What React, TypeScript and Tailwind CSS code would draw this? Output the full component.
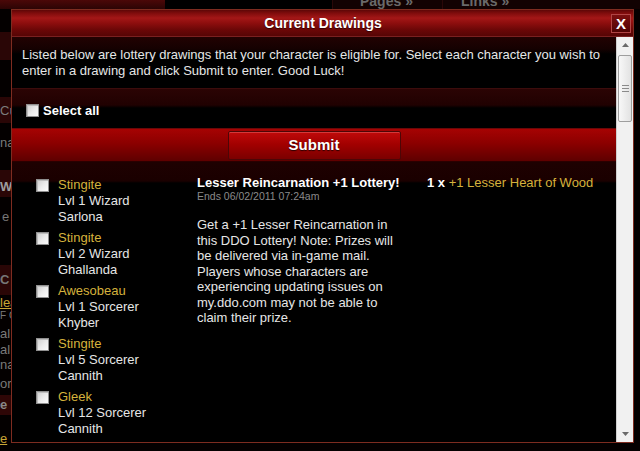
import React from "react";

const characters = [
  { name: "Stingite", lvl: "Lvl 1 Wizard", server: "Sarlona" },
  { name: "Stingite", lvl: "Lvl 2 Wizard", server: "Ghallanda" },
  { name: "Awesobeau", lvl: "Lvl 1 Sorcerer", server: "Khyber" },
  { name: "Stingite", lvl: "Lvl 5 Sorcerer", server: "Cannith" },
  { name: "Gleek", lvl: "Lvl 12 Sorcerer", server: "Cannith" },
];

// the dark site page peeking out around the popup
const sideRows = [
  { h: "h-[23px]", band: false, text: "", cls: "" },
  { h: "h-[28px]", band: true, text: "", cls: "" },
  { h: "h-[37px]", band: false, text: "", cls: "" },
  { h: "h-[26px]", band: true, text: "Current", cls: "pt-[6px] text-[#7c7c7c]" },
  { h: "h-[47px]", band: false, text: "nal", cls: "pt-[12px] text-[#7a7a7a]" },
  { h: "h-[27px]", band: true, text: "Wizard", cls: "pt-[9px] font-bold text-[#9d9d9d]" },
  { h: "h-[68px]", band: false, text: "e", cls: "pt-[12px] pl-[2px] text-[#777]" },
  { h: "h-[30px]", band: true, text: "C", cls: "pt-[7px] font-bold text-[#777]" },
];

function Checkbox() {
  return (
    <span className="block w-[13px] h-[13px] shrink-0 border border-[#8f8f8f] bg-[linear-gradient(135deg,#cfcfcf_0%,#ececec_55%,#fbfbfb_100%)] shadow-[inset_1px_1px_0_#bdbdbd]" />
  );
}

function PageBehind() {
  return (
    <div className="flex flex-col h-[451px] bg-[#040000]">
      <div className="h-[9px] flex overflow-hidden bg-[#120202]">
        <div className="w-[165px] bg-[linear-gradient(180deg,#4b0808,#2c0404)]" />
        <div className="w-[167px] bg-black" />
        <div className="w-[110px] border-l border-[#2a0808] flex justify-start pl-[27px]">
          <span className="-mt-[7px] text-[14px] font-bold leading-[16px] text-[#6a6a6a]">Pages »</span>
        </div>
        <div className="w-[120px] border-l border-[#2a0808] flex justify-start pl-[18px]">
          <span className="-mt-[7px] text-[14px] font-bold leading-[16px] text-[#6a6a6a]">Links »</span>
        </div>
      </div>
      <div className="w-[180px] flex flex-col text-[13px] leading-[16px]">
        {sideRows.map((r, i) => (
          <div key={i} className={`${r.h} ${r.band ? "bg-[#2a0606]" : ""} ${r.cls}`}>
            {r.text}
          </div>
        ))}
        <div className="h-[100px] flex flex-col text-[#7a7a7a]">
          <span className="text-[#c9a635] underline leading-[14px] pt-[1px]">leader</span>
          <span className="text-[10px] leading-[12px]">F C</span>
          <span className="pt-[4px]">al</span>
          <span className="leading-[15px]">al</span>
          <span className="leading-[15px]">na</span>
          <span className="pt-[4px]">or</span>
        </div>
        <div className="h-[20px] bg-[#2e0606] text-[#888] font-bold pt-[2px]">e</div>
        <div className="pt-[16px] text-[#c9a635] underline">e</div>
      </div>
    </div>
  );
}

export default function App() {
  return (
    <div className="relative w-[640px] h-[451px] overflow-hidden bg-black font-['Liberation_Sans',Arial,sans-serif]">
      <PageBehind />

      <div className="absolute left-[11px] top-[9px] w-[623px] h-[434px] border border-[#7e2c20] bg-black flex flex-col">
        {/* title bar */}
        <div className="h-[27px] shrink-0 flex items-center border-b border-[#7a2020] bg-[linear-gradient(180deg,#5e0707_0px,#7e0c0c_3px,#a41717_8px,#8e0e0e_13px,#6a0707_20px,#560505_26px)]">
          <div className="w-[23px]" />
          <div className="flex-1 text-center text-[14px] font-bold text-white [text-shadow:0_1px_1px_#300]">
            Current Drawings
          </div>
          <button className="mr-[2px] w-[20px] h-[19px] flex items-center justify-center border border-[#b04545] bg-[linear-gradient(180deg,#7c0f0f,#500404)] text-[15px] font-bold leading-none text-white">
            X
          </button>
        </div>

        {/* body */}
        <div className="flex-1 flex min-h-0">
          <div className="w-[604px] flex flex-col text-[#e6e6e6]">
            <div className="h-[51px] pt-[10px] pl-[10px] pr-[8px] text-[13px] leading-[16px] bg-[linear-gradient(180deg,#220202_0px,#150101_12px,#000_17px)]">
              Listed below are lottery drawings that your character is eligible for. Select each character you wish to
              enter in a drawing and click Submit to enter. Good Luck!
            </div>

            <div className="h-[40px] border-t border-[#3c0c0c] flex items-center gap-[4px] pl-[14px] pt-[4px] bg-[linear-gradient(180deg,#2b0404_0px,#200101_16px,#000_19px)]">
              <Checkbox />
              <span className="text-[13px] font-bold text-white">Select all</span>
            </div>

            <div className="h-[34px] flex items-center justify-center border-t border-[#6a0808] border-b border-b-[#2a0000] bg-[linear-gradient(180deg,#a60303_0px,#8c0000_14px,#5c0000_33px)]">
              <button className="w-[173px] h-[29px] rounded-[2px] border border-[#4d0606] bg-[linear-gradient(180deg,#c00a0a_0px,#a30000_12px,#780000_28px)] shadow-[inset_0_1px_0_#d43a3a] text-[15px] font-bold text-white [text-shadow:0_1px_1px_#2a0000]">
                Submit
              </button>
            </div>

            <div className="flex-1 flex items-start bg-[linear-gradient(180deg,#1e0101_0px,#1a0000_19px,#000_21px)]">
              <div className="w-[185px] pl-[24px] pt-[15px] flex flex-col gap-[5px]">
                {characters.map((c, i) => (
                  <div key={i} className="flex items-start gap-[9px]">
                    <div className="pt-[2px]">
                      <Checkbox />
                    </div>
                    <div className="flex flex-col text-[13px] leading-[16px]">
                      <span className="text-[#d5b23c]">{c.name}</span>
                      <span>{c.lvl}</span>
                      <span>{c.server}</span>
                    </div>
                  </div>
                ))}
              </div>

              <div className="w-[230px] pt-[13px] pr-[28px]">
                <div className="whitespace-nowrap text-[13px] font-bold leading-[15px] text-white">
                  Lesser Reincarnation +1 Lottery!
                </div>
                <div className="text-[10.5px] leading-[13px] text-[#8a8a8a]">Ends 06/02/2011 07:24am</div>
                <p className="mt-[14px] text-[13px] leading-[15.5px]">
                  Get a +1 Lesser Reincarnation in this DDO Lottery! Note: Prizes will be delivered via in-game
                  mail. Players whose characters are experiencing updating issues on my.ddo.com may not be able to
                  claim their prize.
                </p>
              </div>

              <div className="pt-[13px] text-[13px] leading-[15px] whitespace-nowrap">
                <span className="font-bold text-white">1 x </span>
                <span className="text-[#d5b23c]">+1 Lesser Heart of Wood</span>
              </div>
            </div>
          </div>

          {/* scrollbar */}
          <div className="w-[17px] flex flex-col border-l border-[#cfcfcf] bg-[#f1f1f1]">
            <div className="h-[16px] flex items-center justify-center">
              <svg width="7" height="4" viewBox="0 0 7 4">
                <path d="M0 4 L3.5 0 L7 4 Z" fill="#6a6a6a" />
              </svg>
            </div>
            <div className="mt-[2px] mx-[1px] h-[67px] rounded-[2px] border border-[#9e9e9e] bg-[linear-gradient(90deg,#f8f8f8,#e2e2e2)] flex flex-col items-center justify-center gap-[2px]">
              <span className="block w-[7px] h-[1px] bg-[#8a8a8a]" />
              <span className="block w-[7px] h-[1px] bg-[#8a8a8a]" />
              <span className="block w-[7px] h-[1px] bg-[#8a8a8a]" />
            </div>
            <div className="flex-1" />
            <div className="h-[16px] flex items-center justify-center">
              <svg width="7" height="4" viewBox="0 0 7 4">
                <path d="M0 0 L3.5 4 L7 0 Z" fill="#6a6a6a" />
              </svg>
            </div>
          </div>
        </div>
      </div>
    </div>
  );
}
